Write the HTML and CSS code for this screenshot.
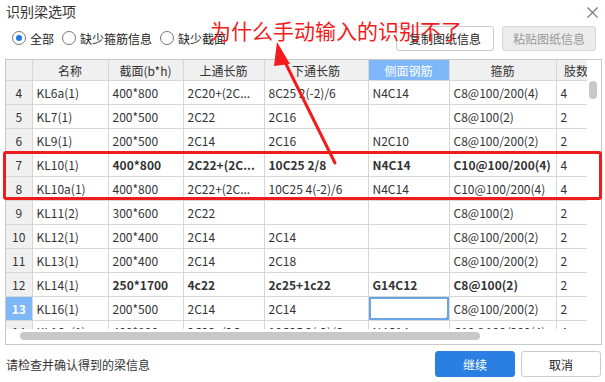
FILE: index.html
```html
<!DOCTYPE html>
<html lang="zh">
<head>
  <meta charset="UTF-8">
  <title>识别梁选项</title>
  <link rel="stylesheet" href="styles.css">
</head>
<body>
  <div class="dialog">
    <div class="titlebar">
      <span class="title">识别梁选项</span>
      <span class="close">×</span>
    </div>

    <div class="toolbar">
      <label class="radio"><span class="dot on"></span>全部</label>
      <label class="radio"><span class="dot"></span>缺少箍筋信息</label>
      <label class="radio"><span class="dot"></span>缺少截面</label>
      <div class="spacer"></div>
      <button class="btn copy">复制图纸信息</button>
      <button class="btn paste disabled">粘贴图纸信息</button>
    </div>

    <div class="grid-wrap">
      <div class="grid-main">
        <div class="viewport">
          <table class="grid">
            <colgroup>
              <col style="width:26px"><col style="width:76px"><col style="width:75px"><col style="width:81px">
              <col style="width:104px"><col style="width:81px"><col style="width:107px"><col style="width:40px">
            </colgroup>
            <thead>
              <tr>
                <th></th><th>名称</th><th>截面(b*h)</th><th>上通长筋</th>
                <th>下通长筋</th><th class="sel">侧面钢筋</th><th>箍筋</th><th>肢数</th>
              </tr>
            </thead>
            <tbody>
              <tr><td class="num">4</td><td>KL6a(1)</td><td>400*800</td><td>2C20+(2C...</td><td>8C25 2(-2)/6</td><td>N4C14</td><td>C8@100/200(4)</td><td>4</td></tr>
              <tr><td class="num">5</td><td>KL7(1)</td><td>200*500</td><td>2C22</td><td>2C16</td><td></td><td>C8@100(2)</td><td>2</td></tr>
              <tr><td class="num">6</td><td>KL9(1)</td><td>200*500</td><td>2C14</td><td>2C16</td><td>N2C10</td><td>C8@100/200(2)</td><td>2</td></tr>
              <tr class="bold"><td class="num">7</td><td class="n">KL10(1)</td><td>400*800</td><td>2C22+(2C...</td><td>10C25 2/8</td><td>N4C14</td><td>C10@100/200(4)</td><td class="n">4</td></tr>
              <tr><td class="num">8</td><td>KL10a(1)</td><td>400*800</td><td>2C22+(2C...</td><td>10C25 4(-2)/6</td><td>N4C14</td><td>C10@100/200(4)</td><td>4</td></tr>
              <tr><td class="num">9</td><td>KL11(2)</td><td>300*600</td><td>2C22</td><td></td><td></td><td>C8@100(2)</td><td>2</td></tr>
              <tr><td class="num">10</td><td>KL12(1)</td><td>200*400</td><td>2C14</td><td>2C14</td><td></td><td>C8@100/200(2)</td><td>2</td></tr>
              <tr><td class="num">11</td><td>KL13(1)</td><td>200*400</td><td>2C14</td><td>2C18</td><td></td><td>C8@100/200(2)</td><td>2</td></tr>
              <tr class="bold"><td class="num">12</td><td class="n">KL14(1)</td><td>250*1700</td><td>4c22</td><td>2c25+1c22</td><td>G14C12</td><td>C8@100(2)</td><td class="n">2</td></tr>
              <tr><td class="num cur">13</td><td>KL16(1)</td><td>200*500</td><td>2C14</td><td>2C14</td><td class="focus"><span class="handle"></span></td><td>C8@100/200(2)</td><td>2</td></tr>
              <tr class="peek"><td class="num">14</td><td>KL16a(1)</td><td>400*800</td><td>2C22+(2C...</td><td>10C25 2(-2)/6</td><td>N4C14</td><td>C10@100/200(4)</td><td>4</td></tr>
            </tbody>
          </table>
        </div>
        <div class="vscroll"><div class="vthumb"></div></div>
      </div>
      <div class="hscroll"><div class="hthumb"></div></div>
    </div>

    <div class="footer">
      <span class="hint">请检查并确认得到的梁信息</span>
      <div class="spacer"></div>
      <button class="btn primary">继续</button>
      <button class="btn">取消</button>
    </div>
  </div>

  <!-- 红色批注 -->
  <div class="note">为什么手动输入的识别不了</div>
  <div class="mark"></div>
  <svg class="arrow" width="605" height="382" viewBox="0 0 605 382">
    <line x1="335" y1="163" x2="283" y2="58" stroke="#f21c1c" stroke-width="3" stroke-linecap="round"/>
    <polygon points="277,42 290,64 274,66" fill="#f21c1c"/>
  </svg>
</body>
</html>
```

FILE: styles.css
```css
body {
  margin: 0;
  width: 605px;
  height: 382px;
  overflow: hidden;
  background: #fff;
  font-family: "Noto Sans CJK SC", "Liberation Sans", sans-serif;
  font-size: 12px;
  color: #333;
}
.dialog {
  display: flex;
  flex-direction: column;
  height: 382px;
}
.titlebar {
  display: flex;
  justify-content: space-between;
  align-items: center;
  height: 20px;
  padding: 1px 4px 0 6px;
}
.title {
  font-size: 14px;
  color: #333;
}
.close {
  font-size: 17px;
  color: #777;
  line-height: 1;
}
.toolbar {
  display: flex;
  align-items: center;
  height: 26px;
  margin-top: 4px;
  padding: 0 9px 0 12px;
}
.radio {
  display: flex;
  align-items: center;
  gap: 4px;
  margin-right: 8px;
  color: #222;
}
.dot {
  width: 12px;
  height: 12px;
  border: 1px solid #777;
  border-radius: 50%;
  position: relative;
  background: #fff;
}
.dot.on::after {
  content: "";
  position: absolute;
  left: 3px;
  top: 3px;
  width: 6px;
  height: 6px;
  border-radius: 50%;
  background: #1e78e6;
}
.spacer {
  flex: 1;
}
.btn {
  font-family: inherit;
  font-size: 12px;
  height: 25px;
  padding: 0 11px;
  margin-left: 8px;
  border: 1px solid #ccc;
  border-radius: 3px;
  background: #fff;
  color: #222;
  white-space: nowrap;
}
.btn.copy {
  width: 98px;
  padding: 0;
}
.btn.paste {
  width: 94px;
  padding: 0;
}
.btn.disabled {
  background: #ececec;
  color: #999;
  border-color: #d6d6d6;
}
.grid-wrap {
  margin: 8px 3px 0 5px;
  border: 1px solid #c8c8c8;
  display: flex;
  flex-direction: column;
  height: 284px;
}
.grid-main {
  display: flex;
  height: 269px;
}
.viewport {
  width: 582px;
  overflow: hidden;
}
.grid {
  border-collapse: collapse;
  table-layout: fixed;
  width: 590px;
}
.grid th, .grid td {
  border: 1px solid #d6d6d6;
  white-space: nowrap;
  overflow: hidden;
  padding: 0 4px;
  font-weight: normal;
}
.grid tr:first-child th {
  border-top: none;
}
.grid th:first-child, .grid td:first-child {
  border-left: none;
}
.grid th {
  height: 20px;
  background: #f0f0f0;
  color: #333;
  text-align: center;
}
.grid th.sel {
  background: #7db7f7;
  color: #fff;
}
.grid td {
  height: 23px;
}
.grid tr.peek td {
  vertical-align: top;
  padding-top: 2px;
  height: 21px;
}
.grid td.num {
  background: #f0f0f0;
  text-align: center;
  padding: 0;
}
.grid td.num.cur {
  background: #7db7f7;
  color: #fff;
  font-weight: bold;
}
.grid tr.bold td {
  font-weight: bold;
}
.grid tr.bold td.num, .grid tr.bold td.n {
  font-weight: normal;
}
.grid td.focus {
  position: relative;
  box-shadow: inset 0 0 0 2px #6aa6e6;
}
.handle {
  position: absolute;
  right: -1px;
  bottom: -1px;
  width: 4px;
  height: 4px;
  background: #6aa6e6;
}
.vscroll {
  width: 14px;
  position: relative;
}
.vthumb {
  position: absolute;
  left: 2px;
  top: 21px;
  width: 8px;
  height: 18px;
  border-radius: 4px;
  background: #c8c8c8;
}
.hscroll {
  height: 15px;
  position: relative;
}
.hthumb {
  position: absolute;
  left: 14px;
  top: 3px;
  width: 460px;
  height: 8px;
  border-radius: 4px;
  background: #c8c8c8;
}
.footer {
  display: flex;
  align-items: center;
  padding: 6px 4px 0 6px;
  height: 26px;
}
.hint {
  color: #333;
}
.footer .btn {
  width: 80px;
  height: 26px;
  margin-left: 6px;
}
.btn.primary {
  background: #2b7fe2;
  border-color: #2b7fe2;
  color: #fff;
}
.note {
  position: absolute;
  left: 210px;
  top: 15px;
  font-size: 21px;
  color: #f21c1c;
  white-space: nowrap;
}
.mark {
  position: absolute;
  left: 3px;
  top: 151px;
  width: 593px;
  height: 43px;
  border: 3px solid #ee1c1c;
  border-radius: 3px;
}
.arrow {
  position: absolute;
  left: 0;
  top: 0;
}
```
